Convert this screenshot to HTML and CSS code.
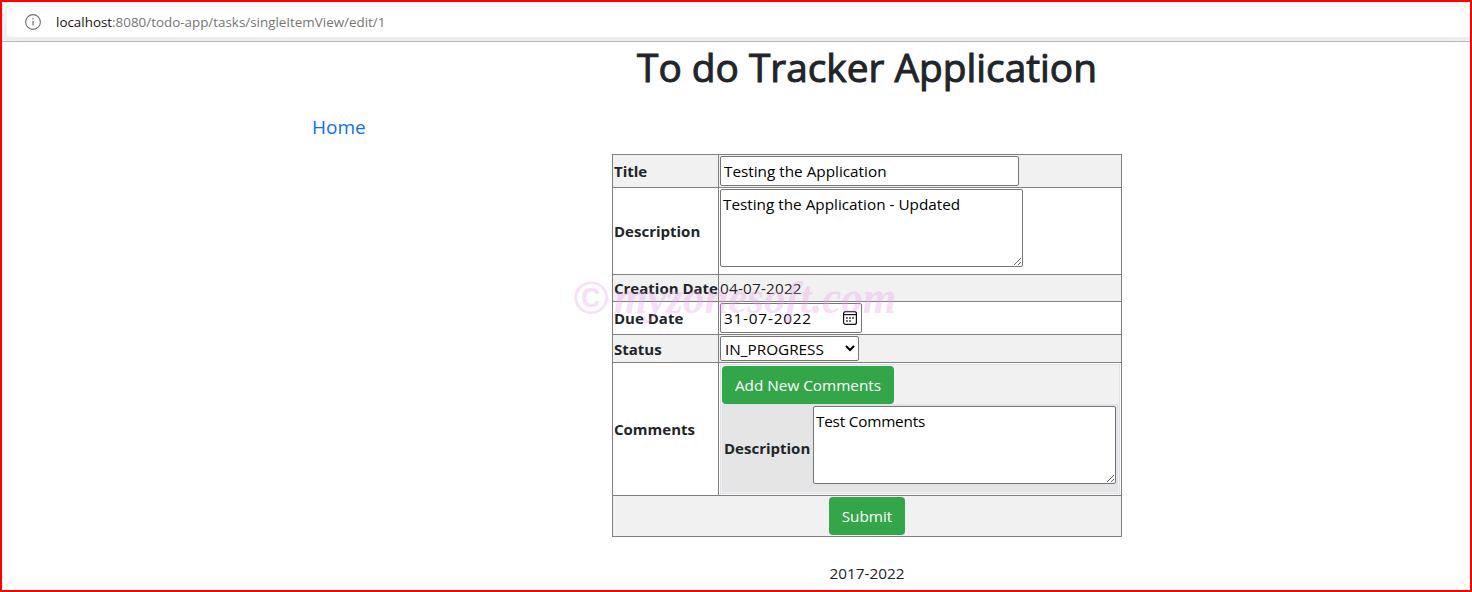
FILE: index.html
```html
<!DOCTYPE html>
<html lang="en">
<head>
<meta charset="utf-8">
<title>To do Tracker Application</title>
<link rel="stylesheet" href="styles.css">
</head>
<body>
<div class="window">
  <div class="toolbar">
    <div class="address">
      <svg class="info" viewBox="0 0 18 18" width="18" height="18"><circle cx="9" cy="9" r="7.4" fill="none" stroke="#6e6e6e" stroke-width="1.1"/><path d="M9 8v4.6M9 5.2v1.4" stroke="#6e6e6e" stroke-width="1.2"/></svg>
      <span class="url"><span class="host">localhost</span>:8080/todo-app/tasks/singleItemView/edit/1</span>
    </div>
  </div>
  <h1 class="heading"><span>To do Tracker Application</span></h1>
  <nav class="nav"><a class="home">Home</a></nav>
  <main class="form">
    <div class="cell label alt"><b>Title</b></div>
    <div class="cell alt"><input class="field title-field" value="Testing the Application"></div>
    <div class="cell label"><b>Description</b></div>
    <div class="cell"><textarea class="field area">Testing the Application - Updated</textarea></div>
    <div class="cell label alt"><b>Creation Date</b></div>
    <div class="cell alt mid"><span class="created">04-07-2022</span></div>
    <div class="cell label"><b>Due Date</b></div>
    <div class="cell">
      <div class="field date"><span class="date-text">31-07-2022</span>
        <svg width="14" height="14" viewBox="0 0 14 14"><rect x=".6" y=".6" width="12.8" height="12.8" rx="2" fill="none" stroke="#111" stroke-width="1.2"/><path d="M.6 3.6h12.8" stroke="#111" stroke-width="1.2"/><path d="M6.2 7h1.6M9.2 7h1.6M3.2 10h1.6M6.2 10h1.6M3.2 7h1.6" stroke="#111" stroke-width="1.5"/></svg>
      </div>
    </div>
    <div class="cell label alt"><b>Status</b></div>
    <div class="cell alt"><select class="field status"><option>IN_PROGRESS</option></select></div>
    <div class="cell label"><b>Comments</b></div>
    <div class="cell">
      <div class="comments">
        <button class="btn add">Add New Comments</button>
        <div class="comment">
          <div class="comment-label"><b>Description</b></div>
          <div class="comment-body"><textarea class="field area test">Test Comments</textarea></div>
        </div>
      </div>
    </div>
    <div class="cell alt footer-cell"><button class="btn submit">Submit</button></div>
  </main>
  <footer class="years"><span>2017-2022</span></footer>
  <svg class="watermark" width="330" height="70" viewBox="0 0 330 70"><text class="wm-c" x="1" y="43" textLength="35" lengthAdjust="spacingAndGlyphs">©</text><text class="wm" x="42" y="42" textLength="282" lengthAdjust="spacingAndGlyphs">myzonesoft.com</text></svg>
</div>
</body>
</html>
```
FILE: styles.css
```css
* { box-sizing: border-box; }
body { margin: 0; background: #fff; color: #212529; font: 15.3px/24px "Open Sans", "Noto Sans", sans-serif; }
.window { position: relative; width: 1472px; height: 592px; border: 2px solid #f00; overflow: hidden; }
.toolbar { height: 40px; padding: 5px 0 4px 5px; background: linear-gradient(#f7f7f7, #ededed); border-bottom: 1px solid #b9b9b9; }
.address { display: flex; align-items: center; height: 30px; padding-left: 17px; gap: 14px; background: #fff; border-radius: 4px 0 0 4px; }
.url { color: #757575; font-size: 13.4px; }
.host { color: #111; }
.heading { display: flex; justify-content: center; height: 48px; margin: 1px 0 0 262px; font-size: 38.8px; line-height: 48px; font-weight: 400; -webkit-text-stroke: 1px #212529; }
.nav { height: 63px; padding: 22px 0 0 310px; }
.home { color: #0d6efd; font-size: 19px; line-height: 28px; }
.form { display: grid; grid-template-columns: 105px 402px; grid-template-rows: 32px 86px 26px 32px 27px 132px 40px; gap: 1px; width: 510px; margin-left: 610px; border: 1px solid gray; background: gray; }
.cell { padding: 1px; background: #fff; min-width: 0; }
.alt { background: #f1f1f1; }
.label { display: flex; align-items: center; white-space: nowrap; }
b { font-size: 15px; }
.mid { display: flex; align-items: center; }
.created { letter-spacing: .2px; }
.date-text { letter-spacing: .8px; }
.field { display: block; margin: 0; padding: 1px 3px; border: 1px solid #767676; border-radius: 2px; background: #fff; color: #000; font: inherit; outline: none; }
.title-field { width: 299px; height: 30px; }
.area { width: 303px; height: 78px; padding: 2px; line-height: 24px; overflow: hidden; }
.test { letter-spacing: -.2px; }
.date { display: flex; align-items: center; justify-content: space-between; width: 142px; height: 30px; padding-right: 4px; }
.status { width: 139px; height: 25px; padding: 0; }
.comments { width: 400px; height: 130px; padding: 1px; border: 1px solid #dee2e6; background: #f1f1f1; }
.btn { display: block; height: 38px; padding: 0; border: 0; border-radius: 4px; background: #34a64a; color: #fff; font: inherit; white-space: nowrap; }
.add { width: 172px; }
.comment { display: grid; grid-template-columns: 89px 1fr; height: 88px; background: #e5e5e5; border: 1px solid #dee2e6; }
.comment-label { display: flex; align-items: center; padding-left: 1px; border-right: 1px solid #dee2e6; white-space: nowrap; }
.comment-body { padding: 1px; }
.footer-cell { grid-column: 1 / 3; display: flex; justify-content: center; }
.submit { width: 76px; }
.years { display: flex; justify-content: center; margin: 24px 0 0 262px; }
.watermark { position: absolute; left: 570px; top: 269px; fill: #e89be8; opacity: .3; pointer-events: none; }
.wm { font: italic bold 46px "Liberation Serif", serif; }
.wm-c { font: italic bold 46px "Liberation Sans", sans-serif; }
```
